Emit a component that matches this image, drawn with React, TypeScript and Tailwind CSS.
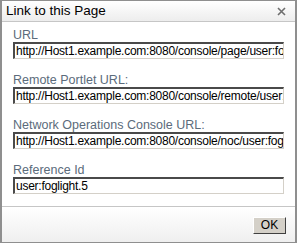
export default function App() {
  const fields = [
    { label: "URL", value: "http://Host1.example.com:8080/console/page/user:foglight.5" },
    { label: "Remote Portlet URL:", value: "http://Host1.example.com:8080/console/remote/user:foglight.5" },
    { label: "Network Operations Console URL:", value: "http://Host1.example.com:8080/console/noc/user:foglight.5" },
    { label: "Reference Id", value: "user:foglight.5" },
  ];

  return (
    <div
      className="w-[297px] h-[243px] flex flex-col bg-white border border-[#8f8f8f] border-l-2 border-r-2"
      style={{ fontFamily: "'Liberation Sans', Arial, sans-serif" }}
    >
      {/* Title bar */}
      <div className="h-[21px] shrink-0 flex items-center justify-between pl-[4px] pr-[9px] bg-gradient-to-b from-white to-[#ededed] border-b border-[#c6c6c6]">
        <span className="text-black text-[13.5px] leading-[16px]">Link to this Page</span>
        <svg width="9" height="9" viewBox="0 0 9 9" className="mt-[1px]">
          <path d="M1 1L8 8M8 1L1 8" stroke="#6e6e6e" strokeWidth="1.6" />
        </svg>
      </div>

      {/* Fields */}
      <div className="flex-1 px-[11px] pt-[7px] flex flex-col gap-[15px]">
        {fields.map((f) => (
          <div key={f.label} className="flex flex-col">
            <label className="text-[#5b6b7b] text-[12.5px] leading-[13px] h-[13px] whitespace-nowrap">{f.label}</label>
            <div className="h-[17px] overflow-hidden bg-white border-t-2 border-l-2 border-r border-b border-t-[#4a4a4a] border-l-[#4a4a4a] border-r-[#d4d0c8] border-b-[#d4d0c8] flex items-center pl-[1px]">
              <span className="text-black text-[12px] tracking-[-0.25px] whitespace-nowrap leading-[13px]">{f.value}</span>
            </div>
          </div>
        ))}
      </div>

      {/* Footer */}
      <div className="h-[36px] shrink-0 border-t border-[#c6c6c6] bg-gradient-to-b from-white to-[#efefef] flex items-start justify-end pt-[10px] pr-[9px]">
        <button className="w-[33px] h-[17px] bg-[#d4d0c8] border border-t-white border-l-white border-r-[#404040] border-b-[#404040] text-black text-[12px] leading-[13px] flex items-center justify-center">
          OK
        </button>
      </div>
    </div>
  );
}
